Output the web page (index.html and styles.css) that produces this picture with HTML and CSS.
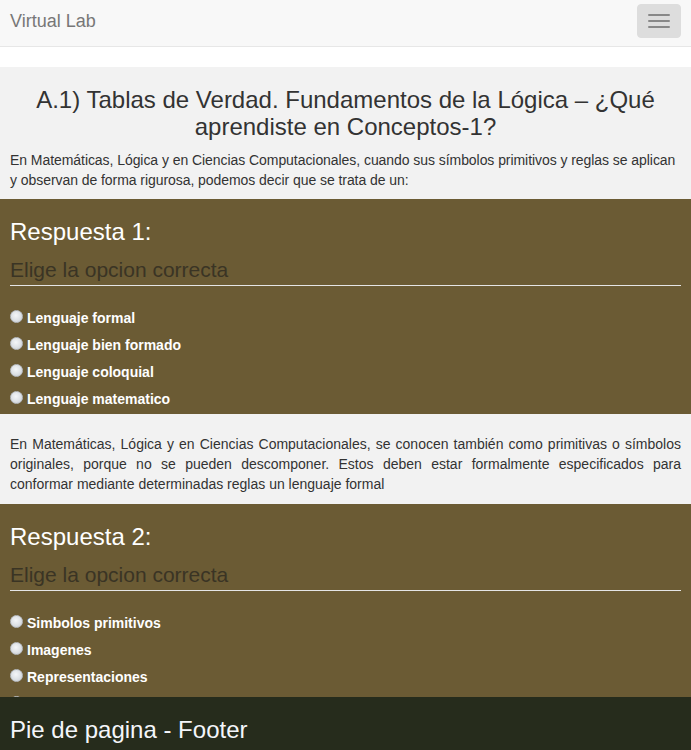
FILE: index.html
```html
<!DOCTYPE html>
<html lang="es">
<head>
<meta charset="utf-8">
<title>Virtual Lab</title>
<link rel="stylesheet" href="styles.css">
</head>
<body>
<nav class="navbar">
  <a class="brand" href="#">Virtual Lab</a>
  <button class="toggle" type="button" aria-label="Menu">
    <span class="bar"></span><span class="bar"></span><span class="bar"></span>
  </button>
</nav>

<main class="page">
  <section class="intro">
    <h3 class="title">A.1) Tablas de Verdad. Fundamentos de la Lógica – ¿Qué aprendiste en Conceptos-1?</h3>
    <p class="text tight">En Matemáticas, Lógica y en Ciencias Computacionales, cuando sus símbolos primitivos y reglas se aplican y observan de forma rigurosa, podemos decir que se trata de un:</p>
  </section>

  <section class="answer">
    <h3 class="answer-title">Respuesta 1:</h3>
    <div class="legend">Elige la opcion correcta</div>
    <div class="options">
      <label class="option"><input type="radio" name="r1"><span>Lenguaje formal</span></label>
      <label class="option"><input type="radio" name="r1"><span>Lenguaje bien formado</span></label>
      <label class="option"><input type="radio" name="r1"><span>Lenguaje coloquial</span></label>
      <label class="option"><input type="radio" name="r1"><span>Lenguaje matematico</span></label>
    </div>
  </section>

  <section class="intro intro-plain">
    <p class="text justify">En Matemáticas, Lógica y en Ciencias Computacionales, se conocen también como primitivas o símbolos originales, porque no se pueden descomponer. Estos deben estar formalmente especificados para conformar mediante determinadas reglas un lenguaje formal</p>
  </section>

  <section class="answer">
    <h3 class="answer-title">Respuesta 2:</h3>
    <div class="legend">Elige la opcion correcta</div>
    <div class="options">
      <label class="option"><input type="radio" name="r2"><span>Simbolos primitivos</span></label>
      <label class="option"><input type="radio" name="r2"><span>Imagenes</span></label>
      <label class="option"><input type="radio" name="r2"><span>Representaciones</span></label>
      <label class="option"><input type="radio" name="r2"><span>Signos</span></label>
    </div>
  </section>
</main>

<footer class="footer">
  <h3 class="footer-title">Pie de pagina - Footer</h3>
</footer>
</body>
</html>
```

FILE: styles.css
```css
* { box-sizing: border-box; }

html, body {
  margin: 0;
  padding: 0;
}

body {
  font-family: "Liberation Sans", Arial, sans-serif;
  font-size: 14px;
  line-height: 20px;
  color: #333;
  background: #fff;
}

.navbar {
  display: flex;
  align-items: flex-start;
  justify-content: space-between;
  height: 47px;
  background: #f8f8f8;
  border-bottom: 1px solid #e7e7e7;
  padding: 0 10px;
}

.brand {
  font-size: 18px;
  line-height: 20px;
  color: #777;
  text-decoration: none;
  padding-top: 11px;
}

.toggle {
  margin-top: 4px;
  width: 44px;
  height: 34px;
  background: #ddd;
  border: 1px solid #ddd;
  border-radius: 4px;
  padding: 0;
  display: flex;
  flex-direction: column;
  align-items: center;
  justify-content: center;
  gap: 4px;
}

.bar {
  display: block;
  width: 22px;
  height: 2px;
  background: #888;
  border-radius: 1px;
}

.page {
  margin-top: 20px;
  padding-bottom: 60px;
}

.intro {
  background: #f2f2f2;
  padding: 0 10px;
  overflow: hidden;
}

.title {
  font-size: 24px;
  font-weight: 400;
  line-height: 26.5px;
  text-align: center;
  margin: 20px 0 10px;
  color: #333;
}

.text {
  margin: 0 0 9px;
}

.tight {
  letter-spacing: -0.06px;
}

.intro-plain .text {
  margin: 20px 0 10px;
}

.justify {
  text-align: justify;
}

.answer {
  background: #6b5b34;
  padding: 0 10px;
  overflow: hidden;
}

.answer-title {
  font-size: 24px;
  font-weight: 400;
  line-height: 26px;
  color: #fff;
  margin: 20px 0 10px;
}

.legend {
  font-size: 21px;
  line-height: 30px;
  color: #3a3424;
  border-bottom: 1px solid #e5e5e5;
  margin-bottom: 20px;
}

.options {
  display: flex;
  flex-direction: column;
}

.option {
  display: flex;
  align-items: flex-start;
  height: 27px;
  padding-top: 2px;
  color: #fff;
  font-weight: 700;
  line-height: 20px;
}

.option input {
  -webkit-appearance: none;
  appearance: none;
  width: 13px;
  height: 13px;
  margin: 2px 4px 0 0;
  border-radius: 50%;
  border: 1px solid #b9bec4;
  background: radial-gradient(circle at 45% 40%, #f4f6f8 0%, #dde1e5 55%, #c4c9ce 100%);
  flex: none;
}

.footer {
  position: fixed;
  left: 0;
  right: 0;
  bottom: 0;
  height: 53px;
  background: #262c1c;
  padding: 0 10px;
  overflow: hidden;
}

.footer-title {
  font-size: 24px;
  font-weight: 400;
  line-height: 26px;
  color: #f4f6fa;
  margin: 20px 0 0;
}
```
